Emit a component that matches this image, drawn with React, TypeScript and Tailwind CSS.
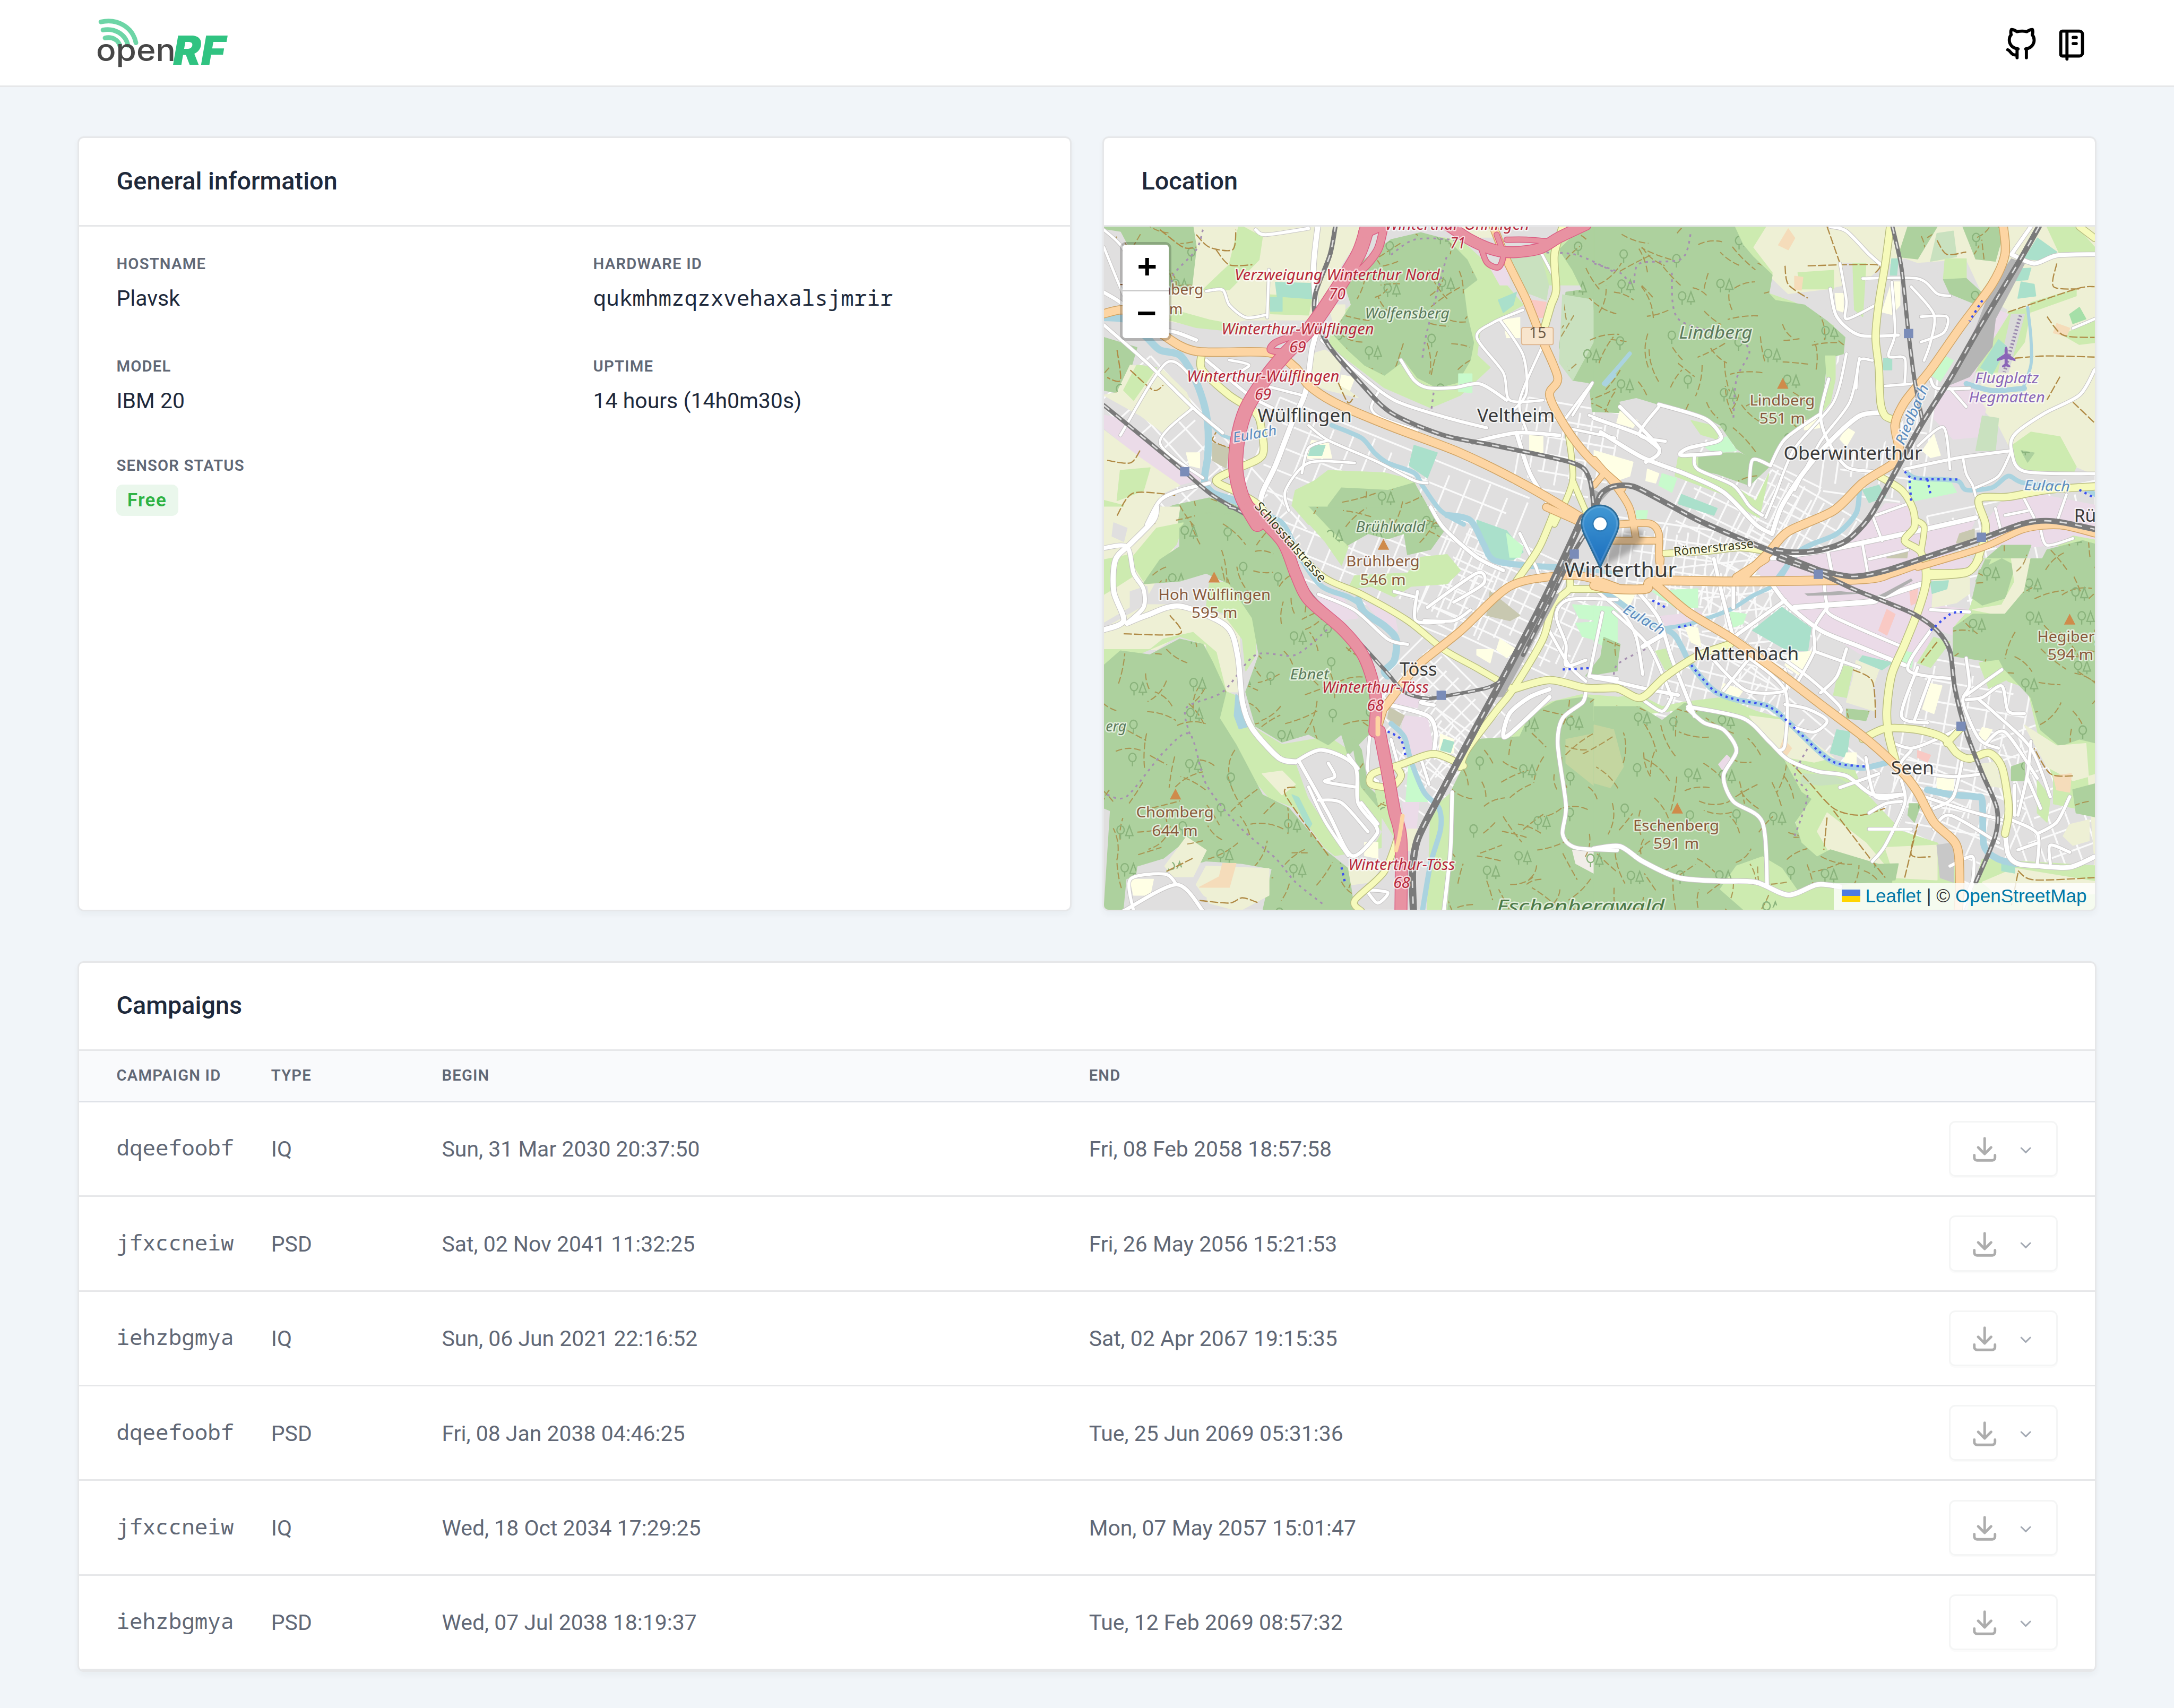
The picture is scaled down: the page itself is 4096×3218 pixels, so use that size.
import React from "react";

/* ------------------------------------------------------------------ */
/* Map geometry                                                        */
/* ------------------------------------------------------------------ */

type Pt = [number, number];
type Sheet = "a" | "b" | "c" | "d";

// Four survey sheets (nw, ne, sw, se): [origin x, origin y, x units, y units].
const SHEETS: Record<Sheet, [number, number, number, number]> = {
  a: [-13, -188, 1.568, 2.0632],
  b: [947, -18, 1.6, 2.24],
  c: [-13, 542, 1.568, 1.96],
  d: [947, 642, 1.6, 2.24],
};

function points(sheet: Sheet, s: string): Pt[] {
  const [ox, oy, kx, ky] = SHEETS[sheet];
  return s
    .trim()
    .split(/\s+/)
    .map((p) => {
      const [x, y] = p.split(",").map(Number);
      return [ox + x / kx, oy + y / ky] as Pt;
    });
}

const n1 = (n: number) => n.toFixed(1);

function area(sheet: Sheet, s: string) {
  return "M" + points(sheet, s).map((p) => `${n1(p[0])} ${n1(p[1])}`).join("L") + "Z";
}

function curve(sheet: Sheet, s: string) {
  const p = points(sheet, s);
  let d = `M${n1(p[0][0])} ${n1(p[0][1])}`;
  for (let i = 0; i < p.length - 1; i++) {
    const a = p[i - 1] ?? p[i];
    const b = p[i];
    const c = p[i + 1];
    const e = p[i + 2] ?? c;
    d += `C${n1(b[0] + (c[0] - a[0]) / 7)} ${n1(b[1] + (c[1] - a[1]) / 7)} ${n1(c[0] - (e[0] - b[0]) / 7)} ${n1(c[1] - (e[1] - b[1]) / 7)} ${n1(c[0])} ${n1(c[1])}`;
  }
  return d;
}

const FARM = "#eef0d5";
const GRASS = "#cdebb0";
const WOOD = "#add19e";
const INDUSTRY = "#ebdbe8";
const SPORT = "#aae0cb";
const PARK = "#c8facc";
const SCHOOL = "#ffffe5";
const ALLOT = "#c9e1bf";
const SAND = "#f5dcba";

const AREAS: [string, Sheet, string][] = [
  // nw
  [FARM, "a", "290,380 820,380 740,540 680,700 650,760 450,760 330,790 200,760 220,640 285,640 300,470"],
  [GRASS, "a", "430,380 500,430 490,520 400,640 320,640 400,540"],
  [GRASS, "a", "200,380 280,380 230,460 190,430"],
  [GRASS, "a", "520,660 650,670 640,740 525,735"],
  [SPORT, "a", "540,610 655,615 650,675 545,665"],
  [SPORT, "a", "525,670 560,670 560,725 525,725"],
  [GRASS, "a", "230,720 340,760 460,790 450,810 300,790 220,760"],
  [WOOD, "a", "20,388 290,388 300,470 285,640 220,640 130,560 70,460 20,400"],
  ["#e0dfdf", "a", "20,400 70,410 130,560 120,700 20,690"],
  [FARM, "a", "1000,380 1190,380 1200,430 1130,430"],
  [GRASS, "a", "860,470 960,420 1100,440 1200,560 1290,700 1250,730 1160,800 1150,900 1190,950 1100,1060 1010,1110 870,1030 700,860 720,760 770,700 750,600"],
  [FARM, "a", "700,700 750,700 750,760 720,790"],
  [FARM, "a", "640,900 690,880 740,920 730,1010 790,1070 700,1040 640,1010"],
  [WOOD, "a", "890,440 980,412 1060,440 1120,520 1150,600 1110,640 1120,740 1140,850 1130,920 1090,1010 1030,1030 970,990 930,920 870,980 810,940 760,880 710,810 740,760 770,700 750,620 790,540 850,480"],
  [SPORT, "a", "1215,680 1270,650 1260,700 1230,730"],
  [INDUSTRY, "a", "1190,550 1240,550 1250,620 1220,620"],
  [ALLOT, "a", "1240,510 1340,480 1370,600 1360,680 1300,650"],
  [GRASS, "a", "1340,470 1460,400 1460,620 1370,620"],
  [PARK, "a", "1095,975 1135,975 1135,1050 1095,1045"],
  [WOOD, "a", "1400,480 1470,388 1600,380 1600,1130 1500,1125 1490,1010 1440,1000 1400,870 1420,650 1470,640 1440,560"],
  [ALLOT, "a", "1410,660 1500,680 1510,830 1440,1000 1400,930"],
  [WOOD, "a", "20,830 120,870 100,960 60,1050 20,1040"],
  [FARM, "a", "100,940 200,960 270,1050 290,1110 200,1210 130,1140 20,1060 60,1050"],
  [GRASS, "a", "80,1040 120,940 180,950 110,1080"],
  [INDUSTRY, "a", "20,1140 60,1150 200,1290 330,1390 240,1420 130,1310 20,1190"],
  [FARM, "a", "20,1200 130,1310 250,1420 200,1450 180,1480 160,1575 20,1575"],
  [GRASS, "a", "70,1360 160,1350 140,1440 60,1480"],
  [GRASS, "a", "20,1480 80,1500 60,1575 20,1575"],
  ["#c8c8b0", "a", "350,1250 400,1270 390,1350 350,1320"],
  [WOOD, "a", "230,1500 340,1470 420,1500 480,1575 150,1575 200,1520"],
  [GRASS, "a", "600,1440 660,1400 700,1360 870,1370 960,1400 1000,1575 640,1575 590,1500"],
  [WOOD, "a", "700,1500 740,1430 880,1440 960,1410 990,1480 1030,1575 690,1575"],
  [SPORT, "a", "960,1260 1030,1290 1000,1390 945,1340"],
  [SCHOOL, "a", "650,1240 700,1250 710,1310 630,1310"],
  [SPORT, "a", "650,1260 690,1260 680,1300 640,1300"],
  [SCHOOL, "a", "1310,1220 1350,1220 1350,1290 1310,1290"],
  [SCHOOL, "a", "1230,760 1280,750 1280,830 1240,830"],
  [SCHOOL, "a", "740,980 780,990 765,1040 735,1020"],
  [SCHOOL, "a", "270,1290 310,1290 310,1350 280,1340"],
  ["#f9c9c4", "a", "1310,680 1360,690 1350,750 1330,750"],
  // ne
  [FARM, "b", "430,30 1560,30 1560,1120 1490,1080 1400,1060 1290,1010 1250,900 1180,800 1230,560 1280,400 1200,330 1150,180 950,200 900,200 870,260 720,310 600,330 480,170"],
  [GRASS, "b", "430,40 530,40 490,130 550,240 540,330 620,370 740,470 700,520 600,420 520,300"],
  [GRASS, "b", "630,240 740,230 740,310 640,310"],
  [SAND, "b", "600,50 620,90 600,140 570,120"],
  [SAND, "b", "620,255 645,260 640,315 620,310"],
  ["#e0dfdf", "b", "880,230 960,180 1060,230 1130,380 1190,330 1200,420 1000,800 880,1000 600,1000 720,700 780,580 760,480 680,330 770,360"],
  ["#e0dfdf", "b", "770,200 810,200 810,400 780,400"],
  [GRASS, "b", "800,200 840,200 830,430 805,400"],
  [WOOD, "b", "970,40 1060,40 1000,180 940,170"],
  [ALLOT, "b", "1060,70 1110,60 1120,170 1040,190"],
  [WOOD, "b", "1140,40 1270,40 1240,190 1180,180"],
  [GRASS, "b", "1085,180 1150,180 1150,265 1080,265"],
  [WOOD, "b", "1080,270 1150,265 1200,330 1170,370 1100,330"],
  [GRASS, "b", "1400,40 1490,40 1560,150 1440,160"],
  [SPORT, "b", "1370,90 1430,150 1380,185 1330,180"],
  [SPORT, "b", "1320,280 1360,290 1365,340 1310,350"],
  [SPORT, "b", "1300,225 1350,220 1340,270 1290,275"],
  [GRASS, "b", "1350,370 1490,310 1490,340 1350,410"],
  ["#a5dfa8", "b", "1470,420 1500,390 1520,440 1480,460"],
  [GRASS, "b", "1450,510 1560,430 1560,540 1500,550"],
  [SAND, "b", "1430,460 1470,480 1460,515 1420,500"],
  [GRASS, "b", "1280,410 1350,390 1330,540 1260,670 1180,670"],
  ["#dadada", "b", "1290,420 1330,420 1280,670 1250,670"],
  [SPORT, "b", "1250,530 1275,560 1230,680 1195,650"],
  [INDUSTRY, "b", "1210,380 1280,420 1200,600 1160,720 1210,830 1190,950 1110,960 1050,870 1060,780 1140,600"],
  ["#b5b5b5", "b", "1290,180 1330,200 1240,440 1230,560 1160,690 1090,730 1180,480 1230,300"],
  [PARK, "b", "1070,590 1110,620 1070,710 1040,680"],
  [WOOD, "b", "0,30 430,30 460,120 490,170 550,250 540,330 560,360 650,380 720,450 775,520 770,590 720,610 700,850 650,900 590,960 545,1075 490,1050 440,1000 390,900 340,860 200,810 130,790 70,840 0,835"],
  [GRASS, "b", "715,600 745,600 745,700 730,800 700,850 720,700"],
  ["#e0dfdf", "b", "80,800 130,785 190,810 340,870 390,930 380,960 290,960 100,870"],
  [GRASS, "b", "300,880 390,910 380,960 330,940"],
  [WOOD, "b", "320,1040 400,1020 450,1020 540,1080 480,1160 380,1110 310,1090"],
  [GRASS, "b", "260,1040 320,1030 320,1100 430,1160 500,1230 540,1110 510,1300 460,1260 400,1200 250,1120"],
  [PARK, "b", "340,990 410,950 440,1010 370,1020"],
  [SCHOOL, "b", "0,1010 120,1060 110,1120 70,1140 0,1060"],
  [SCHOOL, "b", "80,840 135,880 120,910 70,890"],
  [PARK, "b", "210,1110 255,1130 240,1190 200,1160"],
  [SCHOOL, "b", "165,1090 200,1110 190,1150 160,1140"],
  [SPORT, "b", "270,1200 380,1260 370,1290 260,1240"],
  [PARK, "b", "130,1270 165,1270 160,1310 130,1300"],
  [SCHOOL, "b", "780,910 805,930 780,990 760,960"],
  [SCHOOL, "b", "1050,940 1070,1030 1040,1040 1015,1010"],
  [SCHOOL, "b", "920,280 945,280 945,380 920,420 890,410"],
  [SPORT, "b", "895,610 920,610 920,660 895,660"],
  [SPORT, "b", "920,180 940,180 935,250 915,250"],
  [SCHOOL, "b", "745,330 770,330 770,410 750,400"],
  [SCHOOL, "b", "650,880 700,870 700,910 650,920"],
  [GRASS, "b", "1290,990 1350,930 1440,950 1490,1080 1480,1110 1350,1110 1300,1060"],
  [WOOD, "b", "1320,1010 1360,1020 1340,1060"],
  [ALLOT, "b", "1200,860 1250,870 1240,1010 1180,1010"],
  [PARK, "b", "970,1140 1100,1140 1120,1190 980,1230"],
  [SPORT, "b", "830,1180 880,1160 900,1210 850,1235"],
  [INDUSTRY, "b", "900,1240 970,1240 1010,1340 1180,1300 1150,1400 1080,1480 1020,1575 500,1575 560,1480 680,1460 800,1400 870,1290"],
  [INDUSTRY, "b", "1260,1230 1380,1200 1560,1250 1560,1400 1250,1440 1200,1340"],
  [GRASS, "b", "1480,1380 1560,1400 1560,1460 1430,1420"],
  [WOOD, "b", "1260,1420 1350,1420 1330,1500 1310,1575 1180,1575 1210,1480"],
  [WOOD, "b", "1400,1440 1510,1400 1560,1420 1560,1575 1350,1575"],
  ["#c8c8b0", "b", "1130,1370 1175,1350 1175,1400 1120,1410"],
  ["#c8c8b0", "b", "910,1460 970,1440 965,1490 900,1490"],
  // sw
  [FARM, "c", "0,0 250,0 230,160 150,340 0,450"],
  [GRASS, "c", "180,80 260,60 240,140 140,280 100,200"],
  [GRASS, "c", "20,200 100,180 110,260 60,300 20,330"],
  ["#e0dfdf", "c", "50,60 90,80 80,130 45,110"],
  ["#e0dfdf", "c", "100,320 150,300 160,370 100,410"],
  [FARM, "c", "20,460 150,370 260,370 380,410 430,480 440,700 390,700 350,540 250,480 180,540 20,540"],
  [GRASS, "c", "340,290 420,280 480,430 480,560 450,620 440,500 380,400 330,380"],
  [GRASS, "c", "20,540 160,540 200,500 290,475 360,550 390,700 430,720 480,840 560,900 700,870 760,920 800,1060 860,1150 860,1290 720,1320 690,1290 600,1140 520,1100 440,980 380,850 360,760 330,520 250,490 120,560 20,620"],
  [WOOD, "c", "250,80 300,20 460,30 520,90 600,240 650,360 760,500 820,600 850,760 830,850 760,940 740,860 700,900 640,860 560,890 480,830 450,700 490,560 470,420 400,290 330,250 250,280 140,290 190,200 250,150"],
  [WOOD, "c", "20,600 70,545 160,560 250,500 320,520 350,590 390,700 370,800 420,900 500,1090 580,1140 690,1300 760,1370 780,1540 500,1540 530,1370 440,1350 330,1340 210,1380 270,1260 200,1330 120,1360 100,1540 20,1540 40,1150 20,1140"],
  [FARM, "c", "270,1250 330,1300 290,1400 230,1400 205,1360"],
  [FARM, "c", "330,1360 520,1370 520,1470 430,1530 340,1500 300,1430"],
  ["#e0dfdf", "c", "90,1410 220,1400 330,1480 330,1540 80,1540"],
  [SCHOOL, "c", "100,1410 170,1410 160,1470 110,1470"],
  [SAND, "c", "380,1350 420,1350 400,1440 310,1440 370,1400"],
  [FARM, "c", "500,1010 560,1000 600,1050 560,1090"],
  ["#aad3df", "c", "420,710 440,730 460,830 430,840 415,790"],
  [WOOD, "c", "770,860 800,920 820,1060 880,1130 860,1150 800,1060 780,940"],
  ["#e0dfdf", "c", "600,960 690,920 780,980 790,1110 860,1230 820,1320 760,1330 640,1100"],
  [SPORT, "c", "590,1090 610,1100 650,1200 640,1220"],
  [SCHOOL, "c", "810,1270 850,1270 850,1330 810,1320"],
  [WOOD, "c", "640,0 990,0 1050,90 1010,160 940,180 930,100 880,120 820,100 750,150 700,100"],
  [GRASS, "c", "640,0 700,80 760,150 740,220 690,130 640,60"],
  [GRASS, "c", "980,190 1060,180 1100,240 1060,290 950,300 900,340 830,300 760,310 780,260 940,250"],
  [INDUSTRY, "c", "660,330 740,340 790,420 720,430"],
  [INDUSTRY, "c", "810,360 900,410 910,470 870,450"],
  [SPORT, "c", "1150,50 1240,90 1290,170 1260,200 1200,200 1160,130"],
  [PARK, "c", "1240,100 1290,150 1280,190 1250,190"],
  ["#c8c8b0", "c", "1190,320 1280,410 1250,430 1180,410"],
  [SCHOOL, "c", "1220,500 1270,540 1240,570 1210,540"],
  [SCHOOL, "c", "1150,540 1200,540 1190,590 1150,560"],
  [PARK, "c", "1450,440 1575,430 1575,560 1500,500 1470,490"],
  [PARK, "c", "1440,370 1575,380 1575,440 1460,420"],
  [INDUSTRY, "c", "925,790 1000,800 1020,930 960,950 925,860"],
  [INDUSTRY, "c", "940,690 980,700 970,760 890,740"],
  [INDUSTRY, "c", "925,1120 975,1115 965,1230 935,1220"],
  ["#c8c8b0", "c", "885,760 930,790 915,830 880,800"],
  [PARK, "c", "945,960 1000,1115 935,1115"],
  [SCHOOL, "c", "1040,860 1080,880 1080,930 1035,940"],
  [SPORT, "c", "1050,880 1080,890 1070,930 1040,920"],
  [GRASS, "c", "840,1060 880,1080 900,1250 860,1170"],
  [FARM, "c", "760,1360 860,1360 830,1420 770,1430"],
  [FARM, "c", "940,1220 970,1220 960,1300 930,1300"],
  [GRASS, "c", "1010,1150 1075,1080 1140,900 1250,870 1310,800 1370,740 1470,710 1575,720 1575,900 1070,1540 1000,1540"],
  [WOOD, "c", "1075,1070 1150,880 1280,870 1310,790 1390,735 1480,720 1600,760 1600,1560 1060,1560 1080,1250"],
  ["#c4d6a0", "c", "1420,880 1500,860 1540,820 1600,830 1600,1060 1510,1060 1420,970"],
  ["#f1ede8", "c", "1440,1300 1600,1290 1600,1370 1510,1390 1450,1350"],
  [WOOD, "c", "1480,640 1530,560 1575,560 1575,620"],
  // se
  [GRASS, "d", "0,610 140,590 210,640 280,620 400,600 500,660 600,700 700,860 800,900 830,1000 950,1180 1060,1230 1130,1350 1130,1540 380,1540 650,1300 580,860 280,650 0,700"],
  [FARM, "d", "480,680 590,700 740,860 680,880 600,860 520,760"],
  [FARM, "d", "720,1100 840,1230 900,1330 740,1300 690,1180"],
  [FARM, "d", "900,1250 1060,1240 1060,1390 930,1380"],
  [WOOD, "d", "0,640 140,640 210,700 280,625 460,690 570,830 640,1010 670,1040 620,1140 640,1230 720,1330 940,1320 930,1390 760,1410 680,1410 620,1450 520,1540 0,1540"],
  ["#c4d6a0", "d", "0,720 60,740 90,900 50,990 0,970"],
  [WOOD, "d", "690,1290 730,1260 920,1340 920,1400 690,1400"],
  [GRASS, "d", "440,1330 520,1290 580,1340 640,1460 640,1540 480,1540 390,1430"],
  [INDUSTRY, "d", "410,850 425,870 400,920 385,890"],
  [SAND, "d", "585,780 610,820 590,860 575,820"],
  [WOOD, "d", "975,1060 1010,1060 990,1140 970,1110"],
  [INDUSTRY, "d", "500,40 560,0 1200,0 1160,70 1050,80 1040,200 1160,220 1110,330 1050,300 1010,440 950,460 820,410 640,240 590,190 550,130"],
  [INDUSTRY, "d", "200,250 330,230 340,270 220,300"],
  [FARM, "d", "1050,80 1160,80 1160,150 1120,190 1045,210"],
  [SPORT, "d", "1040,100 1095,95 1090,130 1045,150"],
  ["#f9c9c4", "d", "905,220 930,240 905,330 880,310"],
  ["#f9c9c4", "d", "975,130 1000,130 995,190 980,200"],
  [SPORT, "d", "580,210 670,300 660,400 590,390 490,310"],
  [PARK, "d", "420,230 470,240 460,280 420,300"],
  [SCHOOL, "d", "600,410 680,400 640,510 590,460"],
  [SPORT, "d", "830,420 920,450 890,480 820,440"],
  [FARM, "d", "810,440 880,480 860,560 870,660 780,620 800,520"],
  [GRASS, "d", "760,460 800,470 780,600 740,590"],
  [WOOD, "d", "780,650 850,660 840,700 780,690"],
  [SCHOOL, "d", "1040,540 1075,550 1050,670 1015,650"],
  [GRASS, "d", "1050,340 1100,360 1040,470 1000,450"],
  [PARK, "d", "960,400 990,410 980,470 950,460"],
  [SCHOOL, "d", "60,140 130,140 110,200 70,190"],
  [PARK, "d", "180,140 320,130 320,210 250,210"],
  [SCHOOL, "d", "280,290 320,300 330,380 300,360"],
  [SCHOOL, "d", "400,540 460,570 440,610 390,580"],
  [PARK, "d", "0,200 40,250 60,360 0,360"],
  [WOOD, "d", "30,340 80,370 70,470 20,430"],
  [GRASS, "d", "190,400 220,390 250,470 220,480"],
  [SPORT, "d", "750,740 790,750 780,860 730,840"],
  [SCHOOL, "d", "780,840 810,840 810,900 770,880"],
  [SCHOOL, "d", "1060,950 1110,950 1110,1000 1060,1000"],
  ["#f9c9c4", "d", "1000,830 1040,850 1030,880 1000,860"],
  [SCHOOL, "d", "1200,730 1230,740 1210,790 1190,760"],
  [ALLOT, "d", "640,930 740,940 780,970 700,980 640,970"],
  [FARM, "d", "1190,890 1240,880 1260,990 1210,980"],
  [GRASS, "d", "1170,0 1230,0 1170,180 1160,220 1110,300 1130,420 1200,440 1280,530 1340,560 1380,800 1420,950 1420,1060 1560,1100 1560,0"],
  [WOOD, "d", "1190,50 1260,0 1300,30 1270,170 1200,200 1170,170"],
  [FARM, "d", "1290,0 1350,0 1330,140 1280,250 1170,220 1260,200 1300,100"],
  [WOOD, "d", "1350,0 1560,0 1560,800 1500,780 1440,810 1380,740 1350,600 1270,480 1200,440 1110,420 1110,300 1170,240 1270,240 1330,140"],
  [GRASS, "d", "1190,450 1250,440 1280,520 1220,560"],
  [FARM, "d", "1330,720 1430,810 1520,800 1560,1540 1560,930 1480,960 1400,900"],
  [SAND, "d", "1420,940 1475,930 1470,1010 1430,1000"],
  [FARM, "d", "1470,1150 1530,1130 1530,1220 1480,1240 1450,1200"],
  [WOOD, "d", "1480,1000 1560,970 1560,1120 1490,1100"],
  [GRASS, "d", "1370,960 1410,1030 1400,1140 1370,1100"],
  [WOOD, "d", "1290,900 1330,880 1330,960 1290,960"],
  [GRASS, "d", "1200,1300 1560,1330 1560,1540 1150,1540"],
  [FARM, "d", "1200,1400 1300,1340 1560,1400 1560,1450 1250,1460"],
  [SPORT, "d", "1260,1320 1300,1330 1300,1360 1260,1350"],
  ["#c8c8c8", "d", "1060,1240 1110,1230 1110,1400 1070,1380"],
];

const WATER: [number, Sheet, string][] = [
  [14, "a", "20,750 90,760 150,830 190,880 250,900 290,980 320,1080 335,1180 335,1300 325,1400 350,1450 430,1490 480,1575"],
  [7, "a", "340,1170 380,1220 430,1240"],
  [9, "a", "710,1180 800,1230 840,1290 880,1330 960,1370 985,1420 1040,1520 1110,1575"],
  [6, "a", "1568,980 1540,1020"],
  [8, "b", "110,590 80,640 30,720"],
  [6, "b", "1340,390 1350,520 1350,640 1320,760"],
  [9, "b", "970,1110 1000,1130 1120,1140 1150,1180 1230,1170 1280,1120 1330,1150 1500,1170 1560,1210"],
  [10, "b", "820,1180 810,1280 750,1370 640,1440 560,1575"],
  [10, "b", "1150,720 1230,750 1330,740"],
  [10, "c", "480,20 560,60 620,200 680,300 760,340 800,370"],
  [14, "c", "790,350 810,400 870,450 905,500 900,580 870,620 880,640"],
  [12, "c", "1060,30 1130,50 1170,140 1200,200 1290,220 1420,230"],
  [10, "c", "890,820 930,870 950,960 990,1080 1035,1140 1040,1220 1010,1350 985,1530"],
  [8, "c", "1420,230 1575,250"],
  [8, "d", "600,30 560,110 490,160 420,220 300,280 220,300"],
  [11, "d", "0,130 60,170 150,260 240,320 270,380 300,460 370,570 440,610 540,640 610,720 700,840 750,885 830,905 910,880"],
  [13, "d", "1030,1000 1100,1020 1180,1030 1200,1050 1205,1240 1250,1300 1310,1320"],
];

const STREETS: [number, Sheet, string][] = [
  [10, "a", "668,388 655,560 665,780 650,880 630,1050 590,1170 540,1340 500,1450 490,1530"],
  [7, "a", "20,650 70,690 150,780 240,810 300,840"],
  [6, "a", "480,400 510,420 640,395"],
  [5, "a", "330,645 380,640 400,700 450,750 510,740"],
  [5, "a", "520,560 515,750"],
  [6, "a", "330,920 460,1060 530,1110"],
  [6, "a", "20,780 150,930 290,1110 380,1210"],
  [5, "a", "70,1220 210,930 300,1010"],
  [5, "a", "290,1110 190,1250 320,1390"],
  [5, "a", "400,920 460,940 430,990 620,1060"],
  [7, "a", "150,1575 190,1480 250,1440 340,1410"],
  [6, "a", "680,840 780,960 900,1080 1060,1150 1180,1190"],
  [6, "a", "920,920 960,1000 1000,1030 1080,1030 1160,1015 1240,1080"],
  [5, "a", "850,1050 830,1110 860,1150 970,1200"],
  [5, "a", "640,1180 700,1240 840,1320 960,1400 1000,1410"],
  [5, "a", "1290,720 1200,770 1150,830 1230,970 1250,1080 1350,1080"],
  [5, "a", "1220,760 1290,900 1300,1050 1260,1120"],
  [5, "a", "1350,860 1280,1080 1300,1200"],
  [7, "a", "1130,1250 1270,1210 1400,1220"],
  [8, "a", "1270,1210 1310,1370 1370,1500"],
  [5, "a", "1420,1150 1500,1010 1440,1140"],
  [5, "a", "1420,1190 1568,1230"],
  [5, "a", "1490,1140 1568,1180"],
  [5, "a", "1340,480 1380,580"],
  [5, "a", "620,1370 640,1270 700,1240"],
  [5, "a", "580,1520 570,1440 640,1330 780,1330"],
  [5, "a", "20,400 80,480 110,640"],
  [5, "a", "20,470 60,600 90,690"],
  [6, "b", "730,310 750,430 820,510 940,510"],
  [6, "b", "860,1100 780,1080 720,960 700,850 725,700"],
  [6, "b", "730,40 780,60 850,160 900,220"],
  [5, "b", "760,200 780,360 780,440 870,380"],
  [5, "b", "830,265 1000,265 1060,330 1100,340"],
  [5, "b", "920,280 930,500 910,600 960,610 960,720"],
  [5, "b", "980,300 1050,420 1040,540 1020,620"],
  [5, "b", "1010,430 1090,430 1080,500 1010,540"],
  [5, "b", "780,590 740,800 620,1000 560,1200 530,1300"],
  [5, "b", "820,610 790,800 700,970 620,1180"],
  [5, "b", "860,620 820,620 810,740"],
  [9, "b", "890,845 820,860 730,970 650,1100 580,1250 550,1370"],
  [5, "b", "900,730 990,720"],
  [7, "b", "0,870 140,940 200,1000"],
  [8, "b", "20,930 150,1040 280,1110 400,1190 500,1330 550,1370"],
  [7, "b", "80,820 200,1000 160,1060"],
  [7, "b", "200,810 340,870 390,940 380,970 290,1000 270,1030 390,1020"],
  [6, "b", "200,820 140,940 220,970"],
  [6, "b", "310,1030 320,1090 430,1160 480,1250 520,1290"],
  [6, "b", "545,1075 490,1050 480,1160"],
  [6, "b", "545,1075 590,960 700,850"],
  [8, "b", "1547,160 1430,165 1360,200 1290,160"],
  [7, "b", "1350,40 1290,160"],
  [6, "b", "1547,660 1500,770 1390,850 1300,940 1290,1010 1330,1100 1547,1110"],
  [6, "b", "960,1090 1130,1040 1290,1010"],
  [5, "b", "1180,1210 1170,1160 1150,1110 1140,1040"],
  [5, "b", "1290,1010 1250,1120 1180,1170"],
  [6, "b", "1040,700 1060,740 1160,740"],
  [5, "b", "1100,740 1150,820"],
  [5, "b", "1000,990 1080,910 1100,1090"],
  [5, "b", "1547,440 1480,480"],
  [9, "b", "550,1475 720,1440 960,1370 1180,1300"],
  [5, "b", "870,1290 970,1240"],
  [5, "b", "890,1400 860,1290"],
  [6, "b", "720,1430 740,1575"],
  [5, "b", "830,1420 850,1575"],
  [5, "b", "850,1480 970,1440"],
  [5, "b", "1240,1260 1260,1370"],
  [5, "b", "1330,1220 1360,1300"],
  [5, "b", "1460,1200 1430,1320"],
  [5, "b", "1270,1290 1340,1270"],
  [5, "b", "1380,1350 1400,1420 1480,1390"],
  [10, "c", "180,0 170,50 100,140 55,200 50,320 80,430 20,465"],
  [8, "c", "20,155 90,150 110,250 140,310 140,380 90,440"],
  [10, "c", "90,440 150,410 250,375 390,450 425,560 440,740 470,840 550,950 600,965"],
  [7, "c", "600,965 680,920 780,980 790,1120 845,1210 840,1250 770,1320 700,1160 610,960"],
  [6, "c", "670,1110 740,1120 820,1230"],
  [6, "c", "700,970 720,1020 690,1040 780,1060"],
  [6, "c", "640,1060 690,1190 760,1320"],
  [6, "c", "760,940 790,990"],
  [7, "c", "80,1530 240,1430 320,1530"],
  [6, "c", "240,1430 205,1390 100,1410 110,1530"],
  [6, "c", "670,330 780,390 880,500 940,520"],
  [7, "c", "1010,0 1050,80 1150,190 1230,240"],
  [6, "c", "1280,100 1330,230 1340,280"],
  [6, "c", "1000,380 1150,250 1170,290 1080,360"],
  [6, "c", "970,320 965,430 1050,435"],
  [6, "c", "960,340 900,320"],
  [6, "c", "990,430 1080,430 1130,390"],
  [6, "c", "1370,470 1430,600 1480,660"],
  [6, "c", "1575,350 1430,350 1390,410 1420,520 1420,600 1480,580"],
  [6, "c", "1530,400 1490,640"],
  [8, "c", "890,750 1000,790 1025,850 1020,930"],
  [7, "c", "1020,750 980,740 1010,720"],
  [6, "c", "825,870 820,1000 850,1040"],
  [6, "c", "890,880 910,970"],
  [6, "c", "980,950 1005,1050"],
  [7, "c", "1075,1080 1070,1300 1050,1530"],
  [7, "c", "1480,700 1470,740 1410,800 1395,900 1420,1130 1410,1240 1450,1290 1575,1300"],
  [8, "c", "1370,690 1310,720 1250,780 1230,860 1250,860 1370,720"],
  [7, "c", "1490,640 1575,650"],
  [6, "c", "800,1120 850,1200"],
  [6, "c", "820,1450 880,1460 850,1500 820,1460"],
  [9, "d", "0,1255 80,1245 150,1310 260,1380 390,1395 500,1400 600,1455 690,1410 760,1420"],
  [7, "d", "290,650 340,710 400,740 440,830 400,940 430,1050 520,1140 535,1420"],
  [9, "d", "150,380 210,330"],
  [7, "d", "290,640 460,690 540,790 600,870 690,920 780,940 860,1020 950,1020"],
  [7, "d", "140,150 200,260 240,430 310,680"],
  [6, "d", "0,130 90,240 130,340 150,500"],
  [6, "d", "60,230 170,380 240,600"],
  [7, "d", "0,515 60,530 150,560 260,590"],
  [6, "d", "150,610 210,660 240,600"],
  [6, "d", "370,440 470,570 590,570 590,480"],
  [6, "d", "480,430 590,570 590,800 570,830"],
  [6, "d", "400,570 480,430"],
  [6, "d", "590,630 660,650 720,700 680,750 620,730"],
  [6, "d", "540,390 660,510 760,640 750,680"],
  [6, "d", "440,340 530,430"],
  [8, "d", "550,110 600,200 700,310 820,380 960,460"],
  [10, "d", "620,210 720,200 860,185 880,170 1010,110"],
  [7, "d", "590,180 430,340"],
  [6, "d", "710,100 720,200 740,250 950,380"],
  [7, "d", "370,0 400,180 430,340"],
  [7, "d", "430,110 430,210"],
  [6, "d", "720,210 680,300 680,400 630,530"],
  [6, "d", "680,400 820,470"],
  [6, "d", "780,390 750,510 700,580"],
  [6, "d", "1040,310 970,480 1110,520"],
  [6, "d", "1040,220 1160,230"],
  [6, "d", "1000,470 950,680 1030,710"],
  [6, "d", "1040,510 990,700"],
  [6, "d", "910,790 980,820 1060,780 1120,740"],
  [6, "d", "980,830 950,900 1080,940 1150,940 1200,930"],
  [6, "d", "1140,860 1110,1030 1050,1080"],
  [6, "d", "950,960 960,1060 900,1240 860,1310"],
  [6, "d", "840,860 870,1030 960,1020"],
  [6, "d", "850,1100 900,1060 950,1050"],
  [6, "d", "850,1170 980,1170"],
  [6, "d", "760,990 880,930"],
  [6, "d", "1000,1020 1130,1080 1260,1130"],
  [6, "d", "1050,1170 1100,1110 1250,1230"],
  [6, "d", "1100,1330 1170,1290 1170,1400"],
  [9, "d", "1270,1180 1280,1280 1310,1320 1380,1330 1470,1335 1547,1290"],
  [6, "d", "1290,1130 1370,1190 1370,1320"],
  [6, "d", "1370,1190 1430,1140 1470,1030"],
  [6, "d", "1410,1320 1410,1240 1470,1270"],
  [6, "d", "1310,1260 1370,1230"],
  [6, "d", "1150,430 1160,550 1140,620 1190,780 1250,820"],
  [6, "d", "1150,610 1200,600 1260,550 1280,660 1330,670"],
  [6, "d", "1190,610 1240,670 1350,820 1410,1030"],
  [6, "d", "1150,590 1260,480"],
  [6, "d", "1210,800 1270,750 1370,950"],
  [6, "d", "1350,790 1340,930 1310,1110"],
  [6, "d", "1300,980 1300,1110"],
  [6, "d", "1340,950 1380,1080"],
  [8, "d", "1130,1540 1170,1400"],
];

const RESIDENTIAL_GRIDS: { at: Pt; angle: number; cols: number; rows: number; dx: number; dy: number }[] = [
  { at: [690, 560], angle: 25, cols: 12, rows: 8, dx: 26, dy: 26 },
  { at: [985, 560], angle: 8, cols: 11, rows: 6, dx: 21, dy: 30 },
  { at: [1100, 660], angle: -6, cols: 8, rows: 5, dx: 30, dy: 32 },
  { at: [620, 790], angle: 45, cols: 9, rows: 7, dx: 26, dy: 28 },
  { at: [640, 930], angle: 35, cols: 7, rows: 7, dx: 24, dy: 26 },
  { at: [1290, 470], angle: 30, cols: 10, rows: 9, dx: 24, dy: 40 },
  { at: [1440, 100], angle: 8, cols: 7, rows: 9, dx: 28, dy: 46 },
  { at: [820, 330], angle: 10, cols: 7, rows: 5, dx: 26, dy: 34 },
  { at: [340, 330], angle: 22, cols: 13, rows: 7, dx: 40, dy: 44 },
  { at: [90, 250], angle: 48, cols: 9, rows: 4, dx: 50, dy: 44 },
  { at: [1080, 770], angle: 14, cols: 9, rows: 9, dx: 28, dy: 34 },
  { at: [1250, 850], angle: 40, cols: 9, rows: 6, dx: 36, dy: 44 },
  { at: [1570, 830], angle: 10, cols: 6, rows: 8, dx: 38, dy: 40 },
  { at: [1520, 1010], angle: 24, cols: 8, rows: 6, dx: 36, dy: 44 },
  { at: [1700, 1000], angle: -20, cols: 7, rows: 8, dx: 34, dy: 42 },
  { at: [1590, 560], angle: -12, cols: 7, rows: 5, dx: 48, dy: 44 },
  { at: [1170, 400], angle: 26, cols: 8, rows: 6, dx: 30, dy: 36 },
];

const SECONDARY: [number, Sheet, string][] = [
  [13, "a", "1412,380 1385,500 1390,640 1375,700 1355,790"],
  [13, "a", "316,900 318,960 400,1060 480,1130 498,1200 500,1300 430,1350 360,1400 430,1450 490,1500 530,1575"],
  [10, "a", "1425,1200 1440,1400 1385,1575"],
  [10, "a", "1440,1400 1485,1540"],
  [13, "b", "915,40 900,200 880,370 870,520 880,650 885,800 900,860 935,880"],
  [12, "b", "880,1120 950,1180 985,1260 990,1340 960,1400 1010,1450 1030,1575"],
  [10, "b", "990,1310 1020,1340 1010,1450"],
  [13, "b", "1030,1540 1160,1530 1200,1420 1210,1330 1190,1220 1280,1210 1400,1180 1547,1165"],
  [12, "b", "1547,90 1500,40"],
  [11, "b", "215,1455 350,1445 450,1430 530,1445"],
  [11, "c", "490,0 560,100 680,260 800,330 940,430 1050,540 1150,610 1260,690"],
  [12, "c", "1390,0 1340,150 1270,280"],
  [12, "c", "1430,260 1430,310 1380,370 1350,500 1260,690 1210,770 1120,920 1100,985"],
  [12, "c", "1430,310 1575,310"],
  [13, "c", "1260,690 1370,655 1480,685 1575,685"],
  [12, "c", "1110,980 1020,935 920,975 835,1010 830,1050 890,1060 920,1020 910,990"],
  [11, "c", "915,1230 870,1380 780,1490 800,1530"],
  [13, "d", "0,560 70,560 130,600 160,590 220,510 320,420 420,370"],
  [14, "d", "1025,0 1025,110 1000,230 960,370 920,500 905,650 910,760 930,870"],
  [13, "d", "1030,75 1150,60 1190,0"],
  [13, "d", "830,780 900,735 1000,740 1080,775 1120,840 1160,865 1220,840 1260,900 1280,1050 1280,1120 1270,1190"],
  [11, "d", "1090,800 1130,740"],
];

const PRIMARY: [number, Sheet, string][] = [
  [14, "a", "1200,388 1240,520 1300,680 1345,830 1395,990 1370,1060 1420,1190 1490,1310 1590,1430"],
  [15, "a", "20,735 80,720 150,760 200,820 300,885 520,890 600,950 640,1020 720,1090 880,1180 1100,1290 1300,1420 1500,1575"],
  [15, "b", "1265,40 1270,160 1230,290 1130,480 1040,660 960,800 930,900 945,1020 920,1070 830,1150 740,1270 600,1360 540,1450 450,1575"],
  [12, "b", "0,1050 60,1150 110,1260 130,1400"],
  [12, "b", "70,1330 170,1325 200,1370 200,1480 215,1575"],
  [12, "b", "60,1400 200,1400"],
  [10, "b", "0,1160 30,1110"],
  [13, "c", "1360,0 1450,50 1500,80"],
  [14, "c", "870,760 900,710 930,660 980,590 1100,470 1250,300 1400,260 1480,265 1575,305"],
  [14, "c", "870,750 848,840"],
  [14, "d", "530,0 440,80"],
  [13, "d", "205,0 200,90"],
  [16, "d", "0,115 60,130 160,130 190,95 450,98 830,88 920,60 1000,20"],
  [15, "d", "190,110 290,230 420,340 560,480 700,630 850,790 950,920 1000,1010 1050,1140 1120,1240 1130,1400 1125,1540"],
  [11, "b", "1000,1515 1200,1430 1330,1350 1440,1335 1547,1370"],
];

const MOTORWAY: [number, Sheet, string][] = [
  [26, "a", "820,380 790,500 700,690 640,800 560,910 500,1010 450,1120 425,1240 420,1360 440,1470 485,1575"],
  [14, "a", "870,380 850,480 800,560 760,560"],
  [22, "a", "810,410 860,380"],
  [20, "a", "1060,380 1130,440 1200,480 1260,490 1340,475 1400,430 1480,380"],
  [9, "a", "1160,460 1180,530 1215,550 1230,500 1210,420"],
  [9, "a", "1240,440 1300,440 1390,450"],
  [11, "a", "600,820 540,850 525,880 570,890"],
  [21, "c", "460,0 560,130 600,250 640,350 740,460 800,550 830,640 845,740 840,850"],
  [22, "c", "855,850 880,1010 900,1150 920,1260 920,1540"],
];
const MOTORWAY_TO_PRIMARY: [number, Sheet, string][] = [
  [9, "c", "850,800 850,860"],
  [8, "c", "925,1170 915,1250 905,1300"],
];

const RAIL: [number, Sheet, string][] = [
  [9, "a", "722,380 705,500 662,650 660,740 700,860 790,1000 890,1130 1050,1220 1200,1260 1440,1330 1490,1390 1505,1520"],
  [8, "a", "20,1100 150,1240 260,1360 350,1460 470,1550"],
  [8, "b", "922,40 950,220 970,480 990,700 1015,880"],
  [11, "b", "1375,40 1310,200 1190,480 1100,700 1010,900 920,1130 850,1300 780,1400 700,1440 620,1450 560,1440"],
  [11, "b", "0,1280 20,1200 60,1165 120,1165 200,1220 320,1310 450,1390 600,1475 700,1530"],
  [11, "b", "700,1530 800,1555 900,1530 1050,1460 1200,1390 1330,1325 1420,1315 1547,1350"],
  [7, "c", "400,0 460,25 560,120 640,320 720,420 800,520 880,630 930,700 1000,725 1080,710 1180,685 1220,660"],
  [14, "c", "1470,40 1430,150 1350,360 1250,600 1150,830 1030,1110 970,1260 955,1380 958,1540"],
  [8, "c", "1500,60 1440,180 1370,360 1290,560"],
  [9, "d", "570,0 700,65 800,130 880,175 990,240 1060,310 1100,400 1115,560 1150,750 1200,930 1245,1080 1240,1200 1180,1400"],
];

const STREAM_DOTS: [Sheet, string][] = [
  ["b", "960,1100 990,1130 1130,1135"],
  ["b", "975,1140 980,1230"],
  ["b", "1030,1135 1040,1200"],
  ["b", "1200,360 1160,450"],
  ["b", "1500,1180 1547,1215"],
  ["c", "880,850 920,880 935,950"],
  ["c", "740,1365 750,1420"],
  ["c", "1410,615 1490,610"],
  ["d", "300,460 370,570 440,610 540,640 610,720 700,840 750,885 840,900"],
  ["d", "1040,310 1100,240 1140,230"],
  ["d", "180,180 220,210"],
  ["d", "260,295 300,285"],
];

const BOUNDARIES: [Sheet, string][] = [
  ["c", "30,1090 90,1095 200,930 280,860 330,1050 430,1210 540,1330 600,1420 690,1510"],
  ["c", "280,860 270,760 380,700 480,560 600,560 700,460"],
  ["a", "890,500 960,440 1070,440 1200,480 1320,490 1450,500 1568,570"],
  ["a", "985,910 1000,800 1060,500"],
  ["a", "1010,1140 1020,1040"],
  ["a", "320,400 300,480 230,580 230,640"],
  ["b", "0,200 80,240 120,290 140,200 270,180 300,60"],
  ["b", "240,240 260,440 430,520 480,580 440,700 430,880"],
  ["d", "60,560 70,460 160,390"],
  ["d", "620,1200 660,1020 620,940 660,820"],
];

const PATHS: [Sheet, string][] = [
  ["a", "60,880 70,1000 30,990"],
  ["a", "100,960 170,1040 200,1020"],
  ["a", "110,1130 190,960"],
  ["a", "360,480 400,540 470,540"],
  ["a", "300,420 340,470 410,480 420,400"],
  ["a", "190,400 260,470 300,470"],
  ["a", "370,1190 350,1240 400,1270"],
  ["a", "730,1010 760,1090 780,1060"],
  ["a", "30,1320 100,1330 130,1280"],
  ["a", "60,1540 110,1450 240,1460"],
  ["b", "660,210 870,205 870,240"],
  ["b", "590,210 600,290 660,350"],
  ["b", "720,40 760,200"],
  ["b", "1280,410 1490,310 1547,300"],
  ["b", "1300,610 1400,600 1547,605"],
  ["b", "1400,430 1450,510 1547,520"],
  ["b", "1440,690 1400,790"],
  ["b", "1480,800 1547,890"],
  ["b", "1430,200 1420,300 1500,310"],
  ["b", "1060,100 1090,160 1150,150"],
  ["c", "600,1060 570,1090 700,1320"],
  ["c", "80,480 250,480 220,410"],
  ["c", "310,1490 400,1500 440,1480 490,1500"],
  ["c", "210,1380 290,1330"],
  ["d", "580,840 660,960 740,1080 820,1110 900,1080"],
  ["d", "740,1090 800,1200 860,1310 900,1380"],
  ["d", "800,480 860,530 870,690"],
  ["d", "1480,940 1410,930 1360,820"],
  ["d", "960,1380 1000,1150 980,1280 1040,1290"],
  ["d", "1310,1350 1360,1390 1547,1380"],
  ["d", "1310,1360 1290,1500"],
  ["d", "720,1120 710,1260"],
  ["d", "1060,360 1010,450"],
];

const BUILDINGS: [Sheet, number, number][] = [
  ["a", 265, 1365], ["b", 972, 503], ["b", 1197, 1385], ["c", 1445, 178],
  ["c", 1042, 713], ["d", 693, 67], ["d", 1134, 725],
];

const PEAKS: [Sheet, number, number][] = [
  ["b", 583, 720], ["c", 867, 142], ["c", 354, 266], ["c", 237, 1088], ["d", 257, 1080], ["d", 1470, 262],
];

// Small deterministic generator for woodland tracks and tree symbols.
function sequence(seed: number) {
  let s = seed;
  return () => {
    s = (s * 1664525 + 1013904223) % 4294967296;
    return s / 4294967296;
  };
}

const TRACKS = (() => {
  const r = sequence(17);
  const out: string[] = [];
  for (let y = 10; y < 1320; y += 50) {
    for (let x = 10; x < 1914; x += 54) {
      const a = r() * Math.PI * 2;
      const l = 26 + r() * 32;
      const px = x + r() * 30;
      const py = y + r() * 30;
      const b = a + (r() - 0.5) * 1.6;
      const mx = px + Math.cos(a) * l * 0.6;
      const my = py + Math.sin(a) * l * 0.6;
      out.push(`M${n1(px)} ${n1(py)}Q${n1(mx)} ${n1(my)} ${n1(mx + Math.cos(b) * l * 0.6)} ${n1(my + Math.sin(b) * l * 0.6)}`);
    }
  }
  return out.join("");
})();

const TREES = (() => {
  const r = sequence(5);
  const out: string[] = [];
  for (let y = 30; y < 1320; y += 92) {
    for (let x = 30; x < 1914; x += 96) {
      const px = Math.round(x + r() * 50);
      const py = Math.round(y + r() * 50);
      out.push(`M${px} ${py}v-9a7 8 0 1 1 .1 0`);
      if (r() > 0.4) out.push(`M${px + 17} ${py}v-6m-7 0h14l-7-19z`);
    }
  }
  return out.join("");
})();

type Label = { t: string; x: number; y: number; w: number; s: number; c: string; i?: boolean; r?: number };
const RED = "#b8283a";
const BROWN = "#8a5a3c";
const TOWN = "#3a3a3a";
const BLUE = "#5b8cc0";
const GREENISH = "#5b7a5b";

// Position and width in page units, turned into map units below.
const LABELS: Label[] = [
  { t: "Winterthur-Ohringen", x: 1051, y: 162, w: 104, s: 29, c: RED, i: true },
  { t: "71", x: 1051.5, y: 175.5, w: 11, s: 29, c: RED, i: true },
  { t: "Verzweigung Winterthur Nord", x: 964.5, y: 198.5, w: 148, s: 29, c: RED, i: true },
  { t: "70", x: 964.5, y: 212, w: 12, s: 29, c: RED, i: true },
  { t: "Winterthur-Wülflingen", x: 936, y: 237.5, w: 110, s: 29, c: RED, i: true },
  { t: "69", x: 936, y: 250.5, w: 12, s: 29, c: RED, i: true },
  { t: "Winterthur-Wülflingen", x: 911, y: 271.5, w: 110, s: 29, c: RED, i: true },
  { t: "69", x: 911, y: 284.5, w: 12, s: 29, c: RED, i: true },
  { t: "Winterthur-Töss", x: 992, y: 496, w: 77, s: 29, c: RED, i: true },
  { t: "68", x: 992, y: 509, w: 12, s: 29, c: RED, i: true },
  { t: "Winterthur-Töss", x: 1011, y: 624, w: 77, s: 29, c: RED, i: true },
  { t: "68", x: 1011, y: 637, w: 12, s: 29, c: RED, i: true },
  { t: "Wolfensberg", x: 1015, y: 226, w: 61, s: 28, c: GREENISH, i: true },
  { t: "Lindberg", x: 1237.5, y: 240, w: 53, s: 34, c: GREENISH, i: true },
  { t: "Brühlwald", x: 1003, y: 380, w: 50, s: 28, c: GREENISH, i: true },
  { t: "Ebnet", x: 944.5, y: 486.5, w: 28, s: 28, c: GREENISH, i: true },
  { t: "erg", x: 805, y: 524, w: 15, s: 28, c: GREENISH, i: true },
  { t: "Eschenbergwald", x: 1140, y: 654, w: 121, s: 38, c: "#4c7a48", i: true },
  { t: "Taubenberg", x: 838, y: 209, w: 60, s: 28, c: BROWN },
  { t: "552 m", x: 838, y: 223, w: 30, s: 28, c: BROWN },
  { t: "Lindberg", x: 1285.5, y: 289, w: 47, s: 28, c: BROWN },
  { t: "551 m", x: 1285.5, y: 302, w: 33, s: 28, c: BROWN },
  { t: "Brühlberg", x: 997.5, y: 405, w: 53, s: 28, c: BROWN },
  { t: "546 m", x: 997.5, y: 418.5, w: 33, s: 28, c: BROWN },
  { t: "Hoh Wülflingen", x: 876, y: 429, w: 81, s: 28, c: BROWN },
  { t: "595 m", x: 876, y: 442, w: 33, s: 28, c: BROWN },
  { t: "Chomberg", x: 847.5, y: 586, w: 56, s: 28, c: BROWN },
  { t: "644 m", x: 847.5, y: 599.5, w: 33, s: 28, c: BROWN },
  { t: "Eschenberg", x: 1209, y: 595.5, w: 62, s: 28, c: BROWN },
  { t: "591 m", x: 1209, y: 608.5, w: 33, s: 28, c: BROWN },
  { t: "Hegiberg", x: 1493.5, y: 459.5, w: 48, s: 28, c: BROWN },
  { t: "594 m", x: 1493.5, y: 472.5, w: 33, s: 28, c: BROWN },
  { t: "Wülflingen", x: 941, y: 300, w: 68, s: 35, c: TOWN },
  { t: "Veltheim", x: 1093.5, y: 300, w: 56, s: 35, c: TOWN },
  { t: "Oberwinterthur", x: 1336.5, y: 327, w: 100, s: 35, c: TOWN },
  { t: "Winterthur", x: 1169, y: 411, w: 81, s: 40, c: TOWN },
  { t: "Mattenbach", x: 1259.5, y: 472, w: 76, s: 35, c: TOWN },
  { t: "Töss", x: 1023, y: 483, w: 27, s: 35, c: TOWN },
  { t: "Seen", x: 1379.5, y: 554, w: 31, s: 35, c: TOWN },
  { t: "Rümikon", x: 1523, y: 372, w: 54, s: 34, c: TOWN },
  { t: "Flugplatz", x: 1447.5, y: 273, w: 46, s: 28, c: "#8a66b8", i: true },
  { t: "Hegmatten", x: 1447.5, y: 286.5, w: 55, s: 28, c: "#8a66b8", i: true },
  { t: "Eulach", x: 905, y: 313, w: 32, s: 27, c: BLUE, i: true, r: -10 },
  { t: "Eulach", x: 1476.5, y: 350.5, w: 33, s: 27, c: BLUE, i: true, r: 2 },
  { t: "Eulach", x: 1186, y: 447, w: 33, s: 27, c: BLUE, i: true, r: 31 },
  { t: "Riedbach", x: 1379, y: 299, w: 46, s: 27, c: BLUE, i: true, r: -67 },
  { t: "Schlosstalstrasse", x: 931, y: 391, w: 73, s: 24, c: "#3d3d20", r: 49 },
  { t: "Römerstrasse", x: 1236, y: 395, w: 58, s: 24, c: "#3d3d20", r: -6 },
];

const MapDrawing = React.memo(function MapDrawing() {
  const woods = AREAS.filter((a) => a[0] === WOOD).map((a) => area(a[1], a[2]));
  const lines = (set: [number, Sheet, string][], color: string, extra: number) => (
    <g fill="none" stroke={color} strokeLinecap="round" strokeLinejoin="round">
      {set.map(([w, sh, p], i) => (
        <path key={i} d={curve(sh, p)} strokeWidth={w + extra} />
      ))}
    </g>
  );
  return (
    <svg viewBox="0 0 1914 1320" preserveAspectRatio="none" className="block size-full" aria-hidden="true">
      <defs>
        <clipPath id="woods">
          {woods.map((d, i) => (
            <path key={i} d={d} />
          ))}
        </clipPath>
        <linearGradient id="pin" x1="0" y1="0" x2="0" y2="1">
          <stop offset="0" stopColor="#4198d4" />
          <stop offset="1" stopColor="#1a6dbd" />
        </linearGradient>
        <filter id="soft" x="-30%" y="-30%" width="160%" height="160%">
          <feGaussianBlur stdDeviation="5" />
        </filter>
      </defs>
      <rect width="1914" height="1320" fill="#e0dfdf" />
      {RESIDENTIAL_GRIDS.map((g, k) => (
        <g key={k} transform={`translate(${g.at[0]} ${g.at[1]}) rotate(${g.angle})`} stroke="#fafafa" strokeWidth="3.5">
          {Array.from({ length: g.cols + 1 }, (_, i) => (
            <path key={`c${i}`} d={`M${i * g.dx} ${(i * 13) % 20}V${g.rows * g.dy - ((i * 17) % 40)}`} />
          ))}
          {Array.from({ length: g.rows + 1 }, (_, i) => (
            <path key={`r${i}`} d={`M${(i * 23) % 50} ${i * g.dy}H${g.cols * g.dx - ((i * 31) % 60)}`} />
          ))}
        </g>
      ))}
      {AREAS.map(([fill, sh, p], i) => (
        <path key={i} d={area(sh, p)} fill={fill} stroke={fill} strokeWidth="2" strokeLinejoin="round" />
      ))}
      <g clipPath="url(#woods)" fill="none">
        <path d={TRACKS} stroke="#a88b45" strokeOpacity="0.85" strokeWidth="2.2" strokeDasharray="13 5" />
        <path d={TREES} stroke="#8ab37c" strokeWidth="2.4" />
      </g>
      <g fill="none" stroke="#b08a45" strokeWidth="2.4" strokeDasharray="16 4">
        {PATHS.map(([sh, p], i) => (
          <path key={i} d={curve(sh, p)} />
        ))}
      </g>
      <g fill="none" stroke="#a58fb0" strokeWidth="3.4" strokeDasharray="5 8">
        {BOUNDARIES.map(([sh, p], i) => (
          <path key={i} d={curve(sh, p)} />
        ))}
      </g>
      {lines(WATER, "#aad3df", 0)}
      {lines(STREETS, "#c6c4c4", 2.2)}
      {lines(STREETS, "#ffffff", 0)}
      {lines(SECONDARY, "#b9bd80", 3)}
      {lines(SECONDARY, "#f6fabb", 0)}
      {lines(PRIMARY, "#d0a465", 3)}
      {lines(PRIMARY, "#fdd5a3", 0)}
      <g fill="#b0b0b0">
        <path d={area("b", "0,1180 30,1200 60,1170 20,1230 0,1250")} />
        <path d={area("c", "1370,330 1400,330 1300,560 1230,720 1200,720")} />
        <path d={area("d", "650,150 760,140 830,150 740,158 660,160")} />
        <path d={area("d", "880,160 980,85 985,95 900,165")} />
      </g>
      {lines(RAIL, "#7a7a7a", 0)}
      <g fill="none" stroke="#dedede" strokeWidth="2.8" strokeDasharray="14 16">
        {RAIL.map(([, sh, p], i) => (
          <path key={i} d={curve(sh, p)} />
        ))}
      </g>
      {lines(MOTORWAY, "#db5f84", 3)}
      {lines(MOTORWAY, "#e892a2", 0)}
      {lines(MOTORWAY_TO_PRIMARY, "#fdd5a3", 0)}
      <g fill="none" stroke="#3c50f0" strokeWidth="4.4" strokeDasharray="4.4 7">
        {STREAM_DOTS.map(([sh, p], i) => (
          <path key={i} d={curve(sh, p)} />
        ))}
      </g>
      <g fill="none" stroke="#9a8aae" strokeWidth="7" strokeDasharray="3 4">
        <path d={curve("b", "1318,425 1290,560 1268,670")} />
      </g>
      {BUILDINGS.map(([sh, x, y], i) => {
        const [[px, py]] = points(sh, `${x},${y}`);
        return <rect key={i} x={px - 9} y={py - 9} width="18" height="18" fill="#7a8cb8" />;
      })}
      {PEAKS.map(([sh, x, y], i) => {
        const [[px, py]] = points(sh, `${x},${y}`);
        return <path key={i} d={`M${px - 11} ${py + 10}h22l-11-21z`} fill="#cf8b4b" />;
      })}
      <path
        transform="translate(1743 252)"
        d="M0-20c2 0 3 3 3 7v7l15 10v4L3 4v9l5 4v3l-8-2-8 2v-3l5-4V4l-15 4V4L-3-6v-7c0-4 1-7 3-7z"
        fill="#8a66b8"
      />
      <rect x="807" y="195" width="61" height="33" rx="3" fill="#f8e5cd" stroke="#dfb892" strokeWidth="2" />
      <g fontFamily="'Noto Sans', sans-serif" textAnchor="middle">
        <text x="838" y="215" fontSize="29" fill="#6d5a45">15</text>
        {LABELS.map((l, i) => {
          const x = l.x * 2.6786 - 2133;
          const y = l.y * 2.6786 - 438;
          return (
            <text
              key={i}
              transform={`translate(${n1(x)} ${n1(y)}) rotate(${l.r ?? 0})`}
              y={l.s * 0.35}
              fontSize={l.s}
              fontStyle={l.i ? "italic" : "normal"}
              fill={l.c}
              stroke="#ffffff"
              strokeOpacity="0.65"
              strokeWidth="5"
              strokeLinejoin="round"
              paintOrder="stroke"
              textLength={l.w * 2.6786}
              lengthAdjust="spacingAndGlyphs"
            >
              {l.t}
            </text>
          );
        })}
      </g>
      {/* pin */}
      <path d="M957 660L985 605Q1015 580 1040 588Q1050 602 1022 625Z" fill="#000" opacity="0.25" filter="url(#soft)" />
      <g transform="translate(921 537) scale(3)">
        <path
          d="M12.5.5C5.9.5.5 5.9.5 12.4c0 3 1.200 5.600 2.200 7.700L12.500 40.500l9.800-20.400c1-2.100 2.200-4.700 2.200-7.700C24.500 5.900 19.100.5 12.500.5z"
          fill="url(#pin)"
          stroke="#2e6c97"
          strokeWidth="1"
        />
        <path
          d="M12.500 1.600C6.500 1.600 1.600 6.500 1.600 12.400c0 2.700 1.100 5.200 2.100 7.200l8.800 18.300 8.800-18.300c1-2 2.100-4.500 2.100-7.200C23.400 6.500 18.500 1.600 12.500 1.600z"
          fill="none"
          stroke="#fff"
          strokeOpacity="0.14"
          strokeWidth="1.100"
        />
        <circle cx="12.500" cy="12.500" r="5" fill="#2e7ab5" />
        <circle cx="12.500" cy="12.500" r="4.200" fill="#fff" />
      </g>
    </svg>
  );
});

/* ------------------------------------------------------------------ */
/* Icons                                                               */
/* ------------------------------------------------------------------ */

function Logo() {
  return (
    <svg viewBox="129 0 864 504" className="h-14 w-24 overflow-visible" role="img" aria-label="openRF">
      <g fill="none" stroke="#6dd5a6" strokeWidth="27" strokeLinecap="round">
        <path d="M194 127C290 105 378 158 397 248" />
        <path d="M206 174C270 160 338 198 350 262" />
        <path d="M218 220C258 211 298 230 306 272" />
      </g>
      <text x="166" y="354" fontFamily="Inter, sans-serif" fontWeight="500" fontSize="180" fill="#474747" textLength="461" lengthAdjust="spacingAndGlyphs">
        open
      </text>
      <text x="612" y="375" fontFamily="Inter, sans-serif" fontWeight="900" fontStyle="italic" fontSize="231" fill="#30c381" textLength="305" lengthAdjust="spacingAndGlyphs">
        RF
      </text>
    </svg>
  );
}

function GithubIcon() {
  return (
    <svg viewBox="360 144 216 216" className="size-6" fill="none" stroke="#000" strokeWidth="18" strokeLinecap="round" strokeLinejoin="round">
      <path d="M441 334v-51M495 334v-51" />
      <path d="M447 283C412 278 396 256 396 232c0-13 4-24 11-31-3-9-3-21 1-30 11-1 22 5 33 12 17-4 39-4 56 0 11-7 22-13 33-12 3 9 3 21-1 30 7 8 11 19 11 31 0 24-16 46-49 51" />
      <path d="M387 288c17 5 18 30 43 30h11" />
    </svg>
  );
}

function NotebookIcon() {
  return (
    <svg viewBox="648 144 216 216" className="size-6" fill="none" stroke="#000" strokeWidth="18" strokeLinecap="round" strokeLinejoin="round">
      <path d="M702 180h99a18 18 0 0 1 18 18v108a18 18 0 0 1-18 18h-99a9 9 0 0 1-9-9V189a9 9 0 0 1 9-9zM729 180v162M765 216h18M765 252h18" />
    </svg>
  );
}

function DownloadIcon() {
  return (
    <svg viewBox="0 0 24 24" className="size-5" fill="none" stroke="#adadad" strokeWidth="2" strokeLinecap="round" strokeLinejoin="round">
      <path d="M4 17v2a2 2 0 0 0 2 2h12a2 2 0 0 0 2-2v-2M7 11l5 5 5-5M12 4v12" />
    </svg>
  );
}

function ChevronIcon() {
  return (
    <svg viewBox="0 0 8 5" className="mt-0.5 h-[0.3125rem] w-2" fill="none" stroke="#a3a9b3" strokeWidth="1" strokeLinecap="round" strokeLinejoin="round">
      <path d="M1.1 1L4 3.900L6.900 1" />
    </svg>
  );
}

/* ------------------------------------------------------------------ */
/* Page                                                                */
/* ------------------------------------------------------------------ */

function Card({ title, className, children }: { title: string; className: string; children: React.ReactNode }) {
  return (
    <section className={`flex flex-col overflow-hidden rounded-[0.25rem] border-[3px] border-[#e6e7e9] bg-white shadow-[0_0.125rem_0.25rem_rgba(30,41,59,0.04)] ${className}`}>
      <h3 className="flex h-14.25 shrink-0 items-center border-b-[3px] border-[#e6e7e9] px-6 pb-[2px] text-base font-medium text-[#1e293b]">
        {title}
      </h3>
      {children}
    </section>
  );
}

function Field({ label, children }: { label: string; children: React.ReactNode }) {
  return (
    <div>
      <div className="mb-[13px] text-[0.625rem] leading-[46px] font-semibold tracking-[0.04em] text-[#616876] uppercase">{label}</div>
      <div className="text-sm leading-5">{children}</div>
    </div>
  );
}

const CAMPAIGNS = [
  ["dqeefoobf", "IQ", "Sun, 31 Mar 2030 20:37:50", "Fri, 08 Feb 2058 18:57:58"],
  ["jfxccneiw", "PSD", "Sat, 02 Nov 2041 11:32:25", "Fri, 26 May 2056 15:21:53"],
  ["iehzbgmya", "IQ", "Sun, 06 Jun 2021 22:16:52", "Sat, 02 Apr 2067 19:15:35"],
  ["dqeefoobf", "PSD", "Fri, 08 Jan 2038 04:46:25", "Tue, 25 Jun 2069 05:31:36"],
  ["jfxccneiw", "IQ", "Wed, 18 Oct 2034 17:29:25", "Mon, 07 May 2057 15:01:47"],
  ["iehzbgmya", "PSD", "Wed, 07 Jul 2038 18:19:37", "Tue, 12 Feb 2069 08:57:32"],
];

const COLUMNS = "grid grid-cols-[6.225rem_6.875rem_26.05rem_1fr_4.375rem] items-center px-6";
const MONO = "font-['Noto_Sans_Mono','DejaVu_Sans_Mono',monospace]";

export default function App() {
  return (
    <>
      {/* One rem is 16 design pixels; the design is 1400 wide on a 4096 screen. */}
      <style>{"html{font-size:46.8px}"}</style>
      <div className="flex h-[3218px] w-[4096px] flex-col overflow-hidden bg-[#f1f5f9] font-['Roboto',sans-serif] text-[#1e293b]">
        <header className="flex h-14 shrink-0 items-start justify-between border-b-[3px] border-[#e6e7e9] bg-white pr-13.5 pl-[3.6042rem]">
          <Logo />
          <nav className="flex gap-2 pt-4">
            <GithubIcon />
            <NotebookIcon />
          </nav>
        </header>

        <main className="flex flex-col gap-8 px-12.5 pt-8">
          <div className="grid grid-cols-2 gap-5">
            <Card title="General information" className="h-124.75">
              <div className="grid grid-cols-2 gap-x-6 px-6 pt-4">
                <div className="h-16.5">
                  <Field label="Hostname">Plavsk</Field>
                </div>
                <div className="h-16.5">
                  <Field label="Hardware ID">
                    <div className={`${MONO} -mt-[2px]`}>qukmhmzqzxvehaxalsjmrir</div>
                  </Field>
                </div>
                <div className="h-16">
                  <Field label="Model">IBM 20</Field>
                </div>
                <div className="h-16">
                  <Field label="Uptime">14 hours (14h0m30s)</Field>
                </div>
                <Field label="Sensor status">
                  <span className="inline-flex h-5 w-10 items-center justify-center rounded-[0.25rem] bg-[#eaf7ec] pr-[2px] align-top text-xs font-semibold tracking-[0.04em] text-[#2fb344]">
                    Free
                  </span>
                </Field>
              </div>
            </Card>

            <Card title="Location" className="h-124.75">
              <div className="relative min-h-0 flex-1">
                <MapDrawing />
                <div className="absolute top-2.5 left-2.5 flex flex-col rounded-[0.25rem] border-[0.125rem] border-black/20 bg-clip-padding text-[1.375rem] leading-[1.875rem] font-bold text-black">
                  <button className="h-7.5 w-7.5 rounded-t-[0.125rem] border-b-[3px] border-[#ccc] bg-white pt-[2px] pl-[6px] font-['Liberation_Mono',monospace]">+</button>
                  <button className="h-7.5 w-7.5 rounded-b-[0.125rem] bg-white pt-[2px] pl-[4px] font-['Liberation_Mono',monospace]">−</button>
                </div>
                <div className="absolute right-0 bottom-0 flex h-4.25 w-42 items-center bg-white/80 px-[0.3125rem] pb-[3px] font-['Liberation_Sans',sans-serif] text-xs leading-none whitespace-pre text-[#333]">
                  <span className="mr-[0.2rem] flex h-2 w-3 flex-col">
                    <span className="flex-1 bg-[#4c7be1]" />
                    <span className="flex-1 bg-[#ffd500]" />
                  </span>
                  <span className="text-[#0078a8]">Leaflet</span>
                  <span> | © </span>
                  <span className="text-[#0078a8]">OpenStreetMap</span>
                </div>
              </div>
            </Card>
          </div>

          <Card title="Campaigns" className="h-114.5">
            <div className={`${COLUMNS} h-8.25 shrink-0 border-b-[3px] border-[#dfe2e8] bg-[#f9fafc] text-[0.625rem] font-semibold tracking-[0.04em] text-[#616876] uppercase`}>
              <span>Campaign ID</span>
              <span>Type</span>
              <span>Begin</span>
              <span>End</span>
            </div>
            {CAMPAIGNS.map(([id, type, begin, end], i) => (
              <div key={i} className={`${COLUMNS} h-15.25 shrink-0 border-b-[3px] border-[#e6e7e9] text-sm leading-5 text-[#616876]`}>
                <span className={`${MONO} pb-[6px]`}>{id}</span>
                <span className="pt-[2px]">{type}</span>
                <span className="pt-[2px]">{begin}</span>
                <span className="pt-[2px]">{end}</span>
                <button className="flex h-9 w-17.5 items-center justify-between rounded-[0.25rem] border-[3px] border-[#f4f5f5] pr-[0.97rem] pl-3 shadow-[0_0.0625rem_0_rgba(30,41,59,0.02)]">
                  <DownloadIcon />
                  <ChevronIcon />
                </button>
              </div>
            ))}
          </Card>
        </main>
      </div>
    </>
  );
}
